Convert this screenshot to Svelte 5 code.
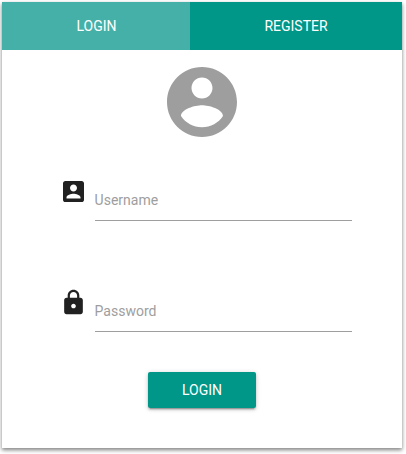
<script>
  const tabs = [
    { label: 'LOGIN', selected: true },
    { label: 'REGISTER', selected: false }
  ];
  const fields = [
    {
      id: 'username',
      label: 'Username',
      type: 'text',
      icon: 'M3 5v14c0 1.1.89 2 2 2h14c1.1 0 2-.9 2-2V5c0-1.1-.9-2-2-2H5c-1.11 0-2 .9-2 2zm12 4c0 1.66-1.34 3-3 3s-3-1.34-3-3 1.34-3 3-3 3 1.34 3 3zm-9 8c0-2 4-3.1 6-3.1s6 1.1 6 3.1v1H6v-1z'
    },
    {
      id: 'password',
      label: 'Password',
      type: 'password',
      icon: 'M18 8h-1V6c0-2.76-2.24-5-5-5S7 3.24 7 6v2H6c-1.1 0-2 .9-2 2v10c0 1.1.9 2 2 2h12c1.1 0 2-.9 2-2V10c0-1.1-.9-2-2-2zm-6 9c-1.1 0-2-.9-2-2s.9-2 2-2 2 .9 2 2-.9 2-2 2zm3.1-9H8.9V6c0-1.71 1.39-3.1 3.1-3.1 1.71 0 3.1 1.39 3.1 3.1v2z'
    }
  ];
</script>

<main class="page">
  <section class="card">
    <nav class="tabs">
      {#each tabs as tab}
        <button class="tab" class:selected={tab.selected}>{tab.label}</button>
      {/each}
    </nav>
    <form class="form">
      <svg class="avatar" viewBox="0 0 24 24" aria-hidden="true">
        <path d="M12 2C6.48 2 2 6.48 2 12s4.48 10 10 10 10-4.48 10-10S17.52 2 12 2zm0 3c1.66 0 3 1.34 3 3s-1.34 3-3 3-3-1.34-3-3 1.34-3 3-3zm0 14.2c-2.5 0-4.71-1.28-6-3.22.03-1.99 4-3.08 6-3.08 1.99 0 5.97 1.09 6 3.08-1.29 1.94-3.5 3.22-6 3.22z" />
      </svg>
      {#each fields as field}
        <div class="field">
          <svg class="prefix" viewBox="0 0 24 24" aria-hidden="true"><path d={field.icon} transform="translate(0.43 -0.43)" /></svg>
          <input id={field.id} type={field.type} placeholder={field.label} />
        </div>
      {/each}
      <button class="submit" type="button">LOGIN</button>
    </form>
  </section>
</main>

<style>
  :global(body) {
    background: #fff;
  }
  .page {
    box-sizing: border-box;
    height: 454px;
    padding: 2px 4px 6px 2px;
    overflow: hidden;
    font-family: Roboto, sans-serif;
    font-size: 14px;
  }
  .card {
    height: 446px;
    background: #fff;
    box-shadow: 0 2px 5px rgba(0, 0, 0, 0.3), 0 2px 3px rgba(0, 0, 0, 0.25);
  }
  .tabs {
    display: flex;
    height: 48px;
    background: #009688;
  }
  button {
    border: 0;
    padding: 0;
    color: #fff;
    font: inherit;
  }
  .tab {
    flex: 1;
    background: none;
  }
  .tab.selected {
    box-sizing: border-box;
    flex: 0 0 188px;
    padding-left: 1px;
    background: #45b0a8;
  }
  .form {
    display: flex;
    flex-direction: column;
    align-items: center;
    padding-top: 10px;
  }
  .avatar {
    width: 84px;
    height: 84px;
    fill: #9e9e9e;
  }
  .field {
    display: flex;
    align-self: stretch;
    align-items: flex-start;
    height: 77px;
    margin: 34px 50px 0 57px;
  }
  .prefix {
    flex: none;
    width: 28px;
    height: 28px;
    margin-right: 8px;
    fill: #212121;
  }
  input {
    box-sizing: border-box;
    flex: 1;
    min-width: 0;
    height: 43px;
    padding: 1px 0 0;
    border: 0;
    border-bottom: 1px solid #9e9e9e;
    border-radius: 0;
    background: none;
    font: inherit;
    text-indent: -0.4px;
  }
  input::placeholder {
    color: #9e9e9e;
    opacity: 1;
  }
  .submit {
    width: 108px;
    height: 36px;
    margin-top: 6px;
    border-radius: 2px;
    background: #009688;
    box-shadow: 0 2px 2px rgba(0, 0, 0, 0.14), 0 3px 1px -2px rgba(0, 0, 0, 0.2), 0 1px 5px rgba(0, 0, 0, 0.2);
  }
</style>
